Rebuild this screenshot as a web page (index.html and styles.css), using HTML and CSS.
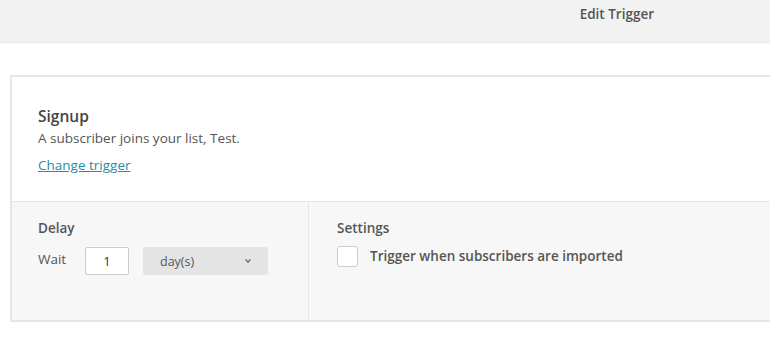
FILE: index.html
```html
<!DOCTYPE html>
<html>
  <head>
    <meta charset="UTF-8">
    <title>Edit Trigger</title>
    <link rel="stylesheet" href="styles.css">
  </head>
  <body>
    <div class="header">
      <div class="header__title">Edit Trigger</div>
    </div>

    <div class="card">
      <div class="card__top">
        <div class="trigger__name">Signup</div>
        <div class="trigger__desc">A subscriber joins your list, Test.</div>
        <a class="trigger__link" href="#">Change trigger</a>
      </div>
      <div class="card__bottom">
        <div class="col col--delay">
          <div class="col__title">Delay</div>
          <div class="delay__row">
            <span class="delay__label">Wait</span>
            <div class="delay__input">1</div>
            <div class="delay__select">
              <span>day(s)</span>
              <svg width="8" height="6" viewBox="0 0 8 6"><path d="M1.5 1.5 L4 4 L6.5 1.5" fill="none" stroke="#777" stroke-width="1.6"/></svg>
            </div>
          </div>
        </div>
        <div class="col col--settings">
          <div class="col__title">Settings</div>
          <label class="check">
            <span class="check__box"></span>
            <span class="check__text">Trigger when subscribers are imported</span>
          </label>
        </div>
      </div>
    </div>
  </body>
</html>
```

FILE: styles.css
```css
* {
  font-family: 'Open Sans', sans-serif;
  box-sizing: border-box;
}
html, body {
  margin: 0;
  padding: 0;
  width: 100%;
  overflow: hidden;
  background: #fff;
}

.header {
  height: 43px;
  background: #f2f2f2;
  border-bottom: 1px solid #e8e8e8;
  display: flex;
  justify-content: flex-end;
  align-items: center;
  padding-right: 116px;
  padding-bottom: 14px;
}
.header__title {
  font-size: 13.5px;
  font-weight: 600;
  color: #555;
}

.card {
  margin: 32px 0 0 10px;
  width: 800px;
  border: 2px solid #e6e6e6;
  border-right: none;
}

.card__top {
  height: 125px;
  padding: 29px 26px 0 26px;
  border-bottom: 1px solid #e6e6e6;
}
.trigger__name {
  font-size: 15.5px;
  font-weight: 600;
  color: #444;
  line-height: 21px;
}
.trigger__desc {
  font-size: 13.5px;
  color: #555;
  line-height: 20px;
  margin-top: 1px;
}
.trigger__link {
  display: inline-block;
  margin-top: 7px;
  font-size: 13.5px;
  color: #2a8aa8;
  text-decoration: underline;
  line-height: 20px;
}

.card__bottom {
  display: flex;
  height: 118px;
  background: #f7f7f7;
}
.col {
  padding: 15px 26px 0 26px;
}
.col--delay {
  width: 297px;
  border-right: 1px solid #e6e6e6;
}
.col--settings {
  flex: 1;
  padding-left: 28px;
}
.col__title {
  font-size: 13.5px;
  font-weight: 600;
  color: #555;
  line-height: 22px;
}

.delay__row {
  display: flex;
  align-items: center;
  margin-top: 8px;
}
.delay__label {
  font-size: 13.5px;
  color: #555;
  width: 47px;
  margin-top: -4px;
}
.delay__input {
  width: 44px;
  height: 28px;
  background: #fff;
  border: 1px solid #ccc;
  border-radius: 2px;
  font-size: 13px;
  color: #333;
  line-height: 26px;
  text-align: center;
  margin-right: 14px;
}
.delay__select {
  width: 125px;
  height: 28px;
  background: #e4e4e4;
  border-radius: 3px;
  display: flex;
  align-items: center;
  justify-content: space-between;
  padding: 0 16px 0 17px;
  font-size: 12.5px;
  color: #555;
}

.check {
  display: flex;
  align-items: center;
  margin-top: 7px;
}
.check__box {
  width: 21px;
  height: 21px;
  background: #fff;
  border: 1px solid #ccc;
  border-radius: 3px;
  margin-right: 12px;
}
.check__text {
  font-size: 13.5px;
  font-weight: 600;
  color: #555;
  margin-top: -2px;
}
```
